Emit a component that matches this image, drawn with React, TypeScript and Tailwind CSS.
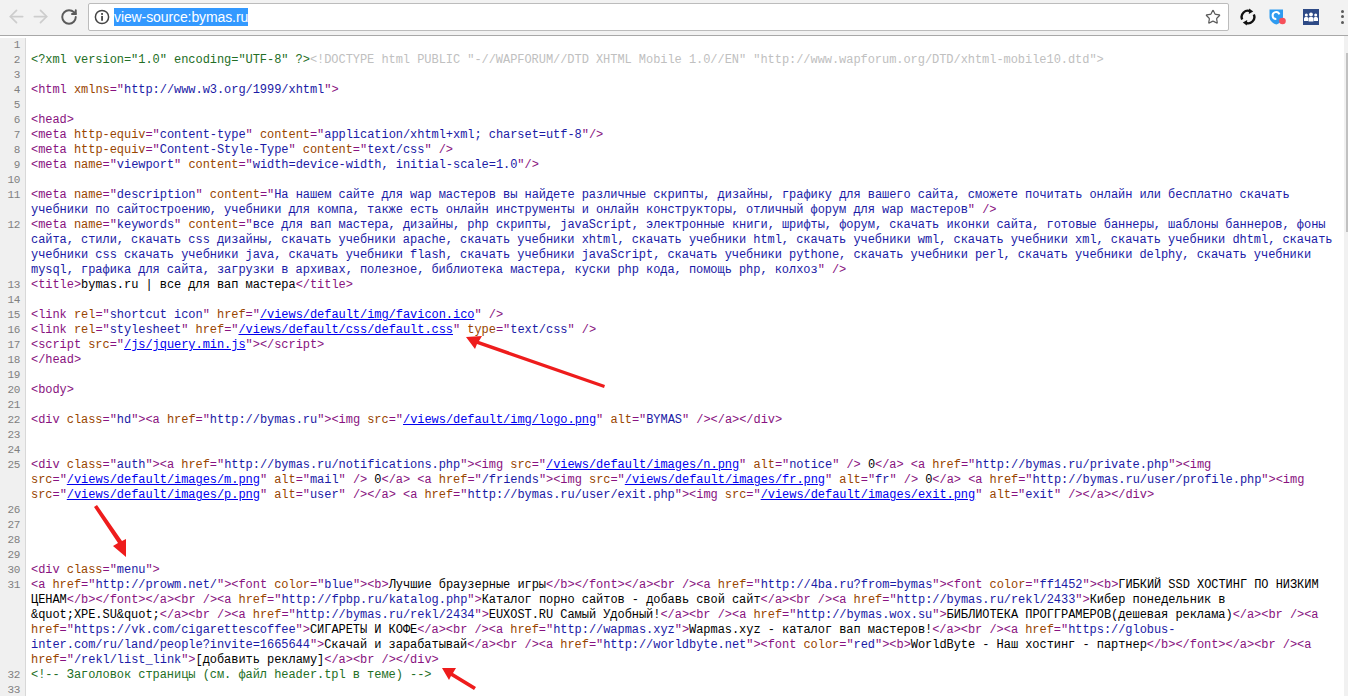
import { ArrowLeft, ArrowRight, RotateCw, Star } from "lucide-react";

type Seg = { text: string; cls: string };

const LINES: [number, string[]][] = [
  [1, [""]],
  [2, [`<?xml version="1.0" encoding="UTF-8" ?><!DOCTYPE html PUBLIC "-//WAPFORUM//DTD XHTML Mobile 1.0//EN" "http://www.wapforum.org/DTD/xhtml-mobile10.dtd">`]],
  [3, [""]],
  [4, [`<html xmlns="http://www.w3.org/1999/xhtml">`]],
  [5, [""]],
  [6, [`<head>`]],
  [7, [`<meta http-equiv="content-type" content="application/xhtml+xml; charset=utf-8"/>`]],
  [8, [`<meta http-equiv="Content-Style-Type" content="text/css" />`]],
  [9, [`<meta name="viewport" content="width=device-width, initial-scale=1.0"/>`]],
  [10, [""]],
  [11, [
    `<meta name="description" content="На нашем сайте для wap мастеров вы найдете различные скрипты, дизайны, графику для вашего сайта, сможете почитать онлайн или бесплатно скачать`,
    `учебники по сайтостроению, учебники для компа, также есть онлайн инструменты и онлайн конструкторы, отличный форум для wap мастеров" />`,
  ]],
  [12, [
    `<meta name="keywords" content="все для вап мастера, дизайны, php скрипты, javaScript, электронные книги, шрифты, форум, скачать иконки сайта, готовые баннеры, шаблоны баннеров, фоны`,
    `сайта, стили, скачать css дизайны, скачать учебники apache, скачать учебники xhtml, скачать учебники html, скачать учебники wml, скачать учебники xml, скачать учебники dhtml, скачать`,
    `учебники css скачать учебники java, скачать учебники flash, скачать учебники javaScript, скачать учебники pythone, скачать учебники perl, скачать учебники delphy, скачать учебники`,
    `mysql, графика для сайта, загрузки в архивах, полезное, библиотека мастера, куски php кода, помощь php, колхоз" />`,
  ]],
  [13, [`<title>bymas.ru | все для вап мастера</title>`]],
  [14, [""]],
  [15, [`<link rel="shortcut icon" href="/views/default/img/favicon.ico" />`]],
  [16, [`<link rel="stylesheet" href="/views/default/css/default.css" type="text/css" />`]],
  [17, [`<script src="/js/jquery.min.js"></script>`]],
  [18, [`</head>`]],
  [19, [""]],
  [20, [`<body>`]],
  [21, [""]],
  [22, [`<div class="hd"><a href="http://bymas.ru"><img src="/views/default/img/logo.png" alt="BYMAS" /></a></div>`]],
  [23, [""]],
  [24, [""]],
  [25, [
    `<div class="auth"><a href="http://bymas.ru/notifications.php"><img src="/views/default/images/n.png" alt="notice" /> 0</a> <a href="http://bymas.ru/private.php"><img`,
    `src="/views/default/images/m.png" alt="mail" /> 0</a> <a href="/friends"><img src="/views/default/images/fr.png" alt="fr" /> 0</a> <a href="http://bymas.ru/user/profile.php"><img`,
    `src="/views/default/images/p.png" alt="user" /></a> <a href="http://bymas.ru/user/exit.php"><img src="/views/default/images/exit.png" alt="exit" /></a></div>`,
  ]],
  [26, [""]],
  [27, [""]],
  [28, [""]],
  [29, [""]],
  [30, [`<div class="menu">`]],
  [31, [
    `<a href="http://prowm.net/"><font color="blue"><b>Лучшие браузерные игры</b></font></a><br /><a href="http://4ba.ru?from=bymas"><font color="ff1452"><b>ГИБКИЙ SSD ХОСТИНГ ПО НИЗКИМ`,
    `ЦЕНАМ</b></font></a><br /><a href="http://fpbp.ru/katalog.php">Каталог порно сайтов - добавь свой сайт</a><br /><a href="http://bymas.ru/rekl/2433">Кибер понедельник в`,
    `&quot;XPE.SU&quot;</a><br /><a href="http://bymas.ru/rekl/2434">EUXOST.RU Самый Удобный!</a><br /><a href="http://bymas.wox.su">БИБЛИОТЕКА ПРОГГРАМЕРОВ(дешевая реклама)</a><br /><a`,
    `href="https://vk.com/cigarettescoffee">СИГАРЕТЫ И КОФЕ</a><br /><a href="http://wapmas.xyz">Wapmas.xyz - каталог вап мастеров!</a><br /><a href="https://globus-`,
    `inter.com/ru/land/people?invite=1665644">Скачай и зарабатывай</a><br /><a href="http://worldbyte.net"><font color="red"><b>WorldByte - Наш хостинг - партнер</b></font></a><br /><a`,
    `href="/rekl/list_link">[добавить рекламу]</a><br /></div>`,
  ]],
  [32, [`<!-- Заголовок страницы (см. файл header.tpl в теме) -->`]],
  [33, [""]],
];

const C = {
  tag: "text-[#881280]",
  attr: "text-[#994500]",
  value: "text-[#1a1aa6]",
  link: "text-[#0000ee] underline",
  text: "text-black",
  comment: "text-[#236e25]",
  doctype: "text-[#c0c0c0]",
};

// small view-source colourer, state carries over wrapped rows of one line
function colourise(rows: string[]): Seg[][] {
  let mode: "text" | "tag" | "val" = "text";
  let tagName = "";
  let attrName = "";

  return rows.map((row) => {
    const out: Seg[] = [];
    let i = 0;
    const valueCls = () =>
      tagName !== "a" && (attrName === "href" || attrName === "src") ? C.link : C.value;

    while (i < row.length) {
      const rest = row.slice(i);
      if (mode === "text") {
        if (rest.startsWith("<!--") || rest.startsWith("<?") || rest.startsWith("<!")) {
          const closer = rest.startsWith("<!--") ? "-->" : rest.startsWith("<?") ? "?>" : ">";
          const end = rest.indexOf(closer) + closer.length;
          out.push({ text: rest.slice(0, end), cls: rest.startsWith("<!D") ? C.doctype : C.comment });
          i += end;
        } else if (rest[0] === "<") {
          const m = rest.match(/^<\/?[a-z]+/)!;
          tagName = m[0].replace(/[</]/g, "");
          out.push({ text: m[0], cls: C.tag });
          mode = "tag";
          i += m[0].length;
        } else {
          const next = rest.indexOf("<");
          const t = next < 0 ? rest : rest.slice(0, next);
          out.push({ text: t, cls: C.text });
          i += t.length;
        }
      } else if (mode === "tag") {
        const ch = rest[0];
        if (ch === '"') {
          out.push({ text: ch, cls: C.tag });
          mode = "val";
          i += 1;
        } else if (/[a-zA-Z]/.test(ch)) {
          const m = rest.match(/^[a-zA-Z-]+/)!;
          attrName = m[0];
          out.push({ text: m[0], cls: C.attr });
          i += m[0].length;
        } else {
          out.push({ text: ch, cls: C.tag });
          if (ch === ">") mode = "text";
          i += 1;
        }
      } else {
        const close = rest.indexOf('"');
        const t = close < 0 ? rest : rest.slice(0, close);
        if (t) out.push({ text: t, cls: valueCls() });
        i += t.length;
        if (close >= 0) {
          out.push({ text: '"', cls: C.tag });
          mode = "tag";
          i += 1;
        }
      }
    }
    return out;
  });
}

function SourceLine({ num, rows }: { num: number; rows: string[] }) {
  const coloured = colourise(rows);
  return (
    <>
      {coloured.map((segs, idx) => (
        <div key={idx} className="flex h-[15px]">
          <div className="w-[26px] shrink-0 border-r border-[#d8d8d8] bg-[#f0f0f0] pr-[5px] text-right text-[11px] leading-[15px] tracking-[-0.4px] text-[#808080]">
            {idx === 0 ? num : ""}
          </div>
          <pre className="pl-[5px] font-['Liberation_Mono',monospace] text-[12px] leading-[15px] tracking-[-0.05px]">
            {segs.map((s, j) => (
              <span key={j} className={s.cls}>
                {s.text}
              </span>
            ))}
          </pre>
        </div>
      ))}
    </>
  );
}

function SyncIcon() {
  return (
    <svg width="18" height="18" viewBox="0 0 18 18" fill="none" stroke="#111" strokeWidth="2.4">
      <path d="M3.2 11.5A6.2 6.2 0 0 1 11.6 3.4" />
      <path d="M14.8 6.5A6.2 6.2 0 0 1 6.4 14.6" />
      <path d="M10.2 0.4l4 3.2-4.4 2.4z" fill="#111" stroke="none" />
      <path d="M7.8 17.6l-4-3.2 4.4-2.4z" fill="#111" stroke="none" />
    </svg>
  );
}

function ShieldIcon() {
  return (
    <svg width="18" height="18" viewBox="0 0 18 18">
      <path d="M0.5 1.5h13.5v7.5c0 3.5-3 6-6.7 7.6C3.5 15 0.5 12.500 0.500 9z" fill="#2f9bf0" />
      <path d="M10.400 6.300A3.500 3.500 0 1 0 7.300 11" fill="none" stroke="#fff" strokeWidth="2" />
      <circle cx="13.500" cy="13" r="3.300" fill="#f6505a" />
    </svg>
  );
}

function GroupIcon() {
  return (
    <svg width="16" height="16" viewBox="0 0 16 16">
      <rect width="16" height="16" fill="#2e4a86" />
      <circle cx="3.300" cy="6" r="1.500" fill="#fff" />
      <circle cx="8" cy="5.500" r="1.900" fill="#fff" />
      <circle cx="12.700" cy="6" r="1.500" fill="#fff" />
      <path d="M1 12V9.500C1 8.500 2 8 3.300 8s2 .5 2 1.500V12z" fill="#fff" />
      <path d="M5.600 12.500V9.500C5.600 8.300 6.600 8 8 8s2.400.3 2.400 1.500v3z" fill="#fff" />
      <path d="M10.700 12V9.500c0-1 .7-1.500 2-1.500s2.300.5 2.300 1.500V12z" fill="#fff" />
    </svg>
  );
}

function Toolbar() {
  return (
    <div className="flex h-[36px] shrink-0 items-center border-b border-[#a8a8a8] bg-[#f2f2f2] pb-[2px]">
      <div className="flex w-[88px] shrink-0 items-center pl-[6px]">
        <ArrowLeft size={21} strokeWidth={2} className="text-[#cdcdcd]" />
        <ArrowRight size={21} strokeWidth={2} className="ml-[3px] text-[#cdcdcd]" />
        <RotateCw size={18} strokeWidth={2.6} className="ml-[9px] text-[#5a5a5a]" />
      </div>
      <div className="flex h-[28px] w-[1141px] shrink-0 items-center rounded-[2px] border border-[#bcbcbc] bg-white pl-[5px] pr-[5px]">
        <svg width="16" height="16" viewBox="0 0 15 15" fill="none" className="shrink-0">
          <circle cx="7.500" cy="7.500" r="6.200" stroke="#444" strokeWidth="1.400" />
          <rect x="6.700" y="6.500" width="1.700" height="4.500" fill="#444" />
          <rect x="6.700" y="3.800" width="1.700" height="1.700" fill="#444" />
        </svg>
        <span className="ml-[4px] bg-[#3399ff] font-['Liberation_Sans',sans-serif] text-[14px] leading-[18px] tracking-[-0.1px] text-white">
          view-source:bymas.ru
        </span>
        <Star size={16} strokeWidth={1.8} className="ml-auto mr-[2px] text-[#5a5a5a]" />
      </div>
      <div className="ml-[10px] flex items-center">
        <SyncIcon />
        <div className="ml-[12px]">
          <ShieldIcon />
        </div>
        <div className="ml-[16px]">
          <GroupIcon />
        </div>
        <div className="ml-[22px] flex flex-col gap-[2.500px]">
          <span className="size-[3px] rounded-full bg-[#5a5a5a]" />
          <span className="size-[3px] rounded-full bg-[#5a5a5a]" />
          <span className="size-[3px] rounded-full bg-[#5a5a5a]" />
        </div>
      </div>
    </div>
  );
}

function Arrows() {
  return (
    <svg width="1348" height="696" className="pointer-events-none absolute left-0 top-0">
      <g fill="#ee1c1c">
        <polygon points="466,337 482,336 479,341 605,385 604,388 477,344 475,349" />
        <polygon points="126,557 113,546 118,543 94,507 97,505 122,541 126,539" />
        <polygon points="442,668 456,668 453,673 476,687 474,690 451,676 449,680" />
      </g>
    </svg>
  );
}

export default function App() {
  return (
    <div className="relative flex h-[696px] w-[1348px] flex-col overflow-hidden bg-white font-['Liberation_Mono',monospace]">
      <Toolbar />
      <div className="flex min-h-0 flex-1">
        <div className="min-w-0 flex-1 pt-[2px]">
          {LINES.map(([num, rows]) => (
            <SourceLine key={num} num={num} rows={rows} />
          ))}
        </div>
        <div className="w-[4px] shrink-0 bg-[#f1f1f1] pl-[2px] pt-[17px]">
          <div className="h-[179px] bg-[#c1c1c1]" />
        </div>
      </div>
      <Arrows />
    </div>
  );
}
